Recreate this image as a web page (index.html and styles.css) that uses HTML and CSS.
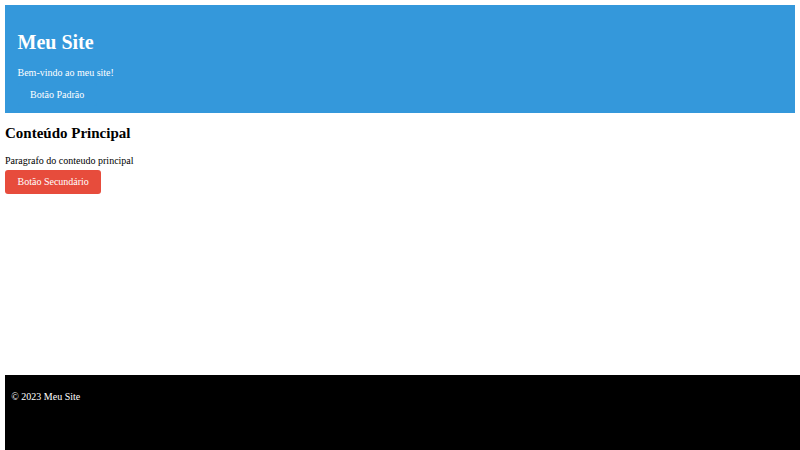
FILE: index.html
```html
<!DOCTYPE html>
<html lang="pt-BR">
<head>
<meta charset="utf-8">
<title>Meu Site</title>
<link rel="stylesheet" href="styles.css">
</head>
<body>
<header class="site-header">
  <h1 class="site-title">Meu Site</h1>
  <p class="site-tagline">Bem-vindo ao meu site!</p>
  <a class="btn btn-primary" href="#">Botão Padrão</a>
</header>
<main class="content">
  <h2 class="content-title">Conteúdo Principal</h2>
  <p class="content-text">Paragrafo do conteudo principal</p>
  <a class="btn btn-secondary" href="#">Botão Secundário</a>
</main>
<footer class="site-footer">
  <p class="footer-text">© 2023 Meu Site</p>
</footer>
</body>
</html>
```

FILE: styles.css
```css
html, body {
  font-family: "Liberation Serif", "Times New Roman", serif;
  font-size: 10px;
  line-height: 1.15;
}

body {
  margin: 5px;
  color: #000;
  background: #fff;
}

.site-header {
  background: #3498db;
  color: #fff;
  padding: 12.5px;
}

.site-title {
  font-size: 20px;
  font-weight: bold;
  margin: 13.4px 0;
}

.site-tagline {
  margin: 10px 0;
}

.btn {
  display: inline-block;
  padding: 6px 12.5px;
  margin: -6px 0;
  color: #fff;
  text-decoration: none;
  border-radius: 3px;
}

.btn-primary {
  background: #3498db;
}

.btn-secondary {
  background: #e74c3c;
}

.content {
  padding-bottom: 20px;
}

.content-title {
  font-size: 15px;
  font-weight: bold;
  margin: 12.45px 0;
}

.content-text {
  margin: 10px 0;
}

.site-footer {
  position: fixed;
  bottom: 0;
  width: 100%;
  height: 75px;
  box-sizing: border-box;
  background: #000;
  color: #fff;
  padding: 6.25px;
}

.footer-text {
  margin: 10px 0;
}
```
